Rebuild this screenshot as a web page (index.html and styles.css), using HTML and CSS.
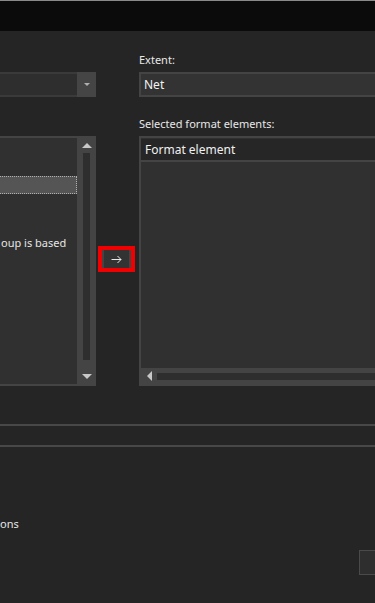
FILE: index.html
```html
<!DOCTYPE html>
<html>
<head>
<meta charset="utf-8">
<link rel="stylesheet" href="styles.css">
</head>
<body>
<div class="topline"></div>
<div class="titlebar"></div>
<div class="main">
  <div class="cols">
    <div class="col-left">
      <div class="combo">
        <div class="combo-field"></div>
        <div class="combo-btn"><span class="tri-down small"></span></div>
      </div>
      <div class="listbox">
        <div class="list-items">
          <div class="item-selected"></div>
          <div class="item-text">oup is based</div>
        </div>
        <div class="vscroll">
          <span class="tri-up"></span>
          <div class="vtrack"></div>
          <span class="tri-down"></span>
        </div>
      </div>
    </div>
    <div class="col-mid">
      <div class="highlight">
        <button class="move-btn" aria-label="Add">
          <svg width="11" height="9" viewBox="0 0 11 9"><path d="M0.5 4.5H10M6.5 1L10 4.5L6.5 8" fill="none" stroke="#e8e8e8" stroke-width="1"/></svg>
        </button>
      </div>
    </div>
    <div class="col-right">
      <div class="label">Extent:</div>
      <div class="textbox">Net</div>
      <div class="label label-list">Selected format elements:</div>
      <div class="grid">
        <div class="grid-header">Format element</div>
        <div class="grid-body"></div>
        <div class="hscroll">
          <span class="tri-left"></span>
          <div class="htrack"></div>
        </div>
      </div>
    </div>
  </div>
  <div class="sep sep1"></div>
  <div class="sep sep2"></div>
  <div class="footer">
    <div class="footer-text">ons</div>
    <div class="footer-btn-row"><div class="footer-btn"></div></div>
  </div>
</div>
</body>
</html>
```
FILE: styles.css
```css
html, body {
  margin: 0;
  padding: 0;
}
body {
  width: 375px;
  height: 603px;
  overflow: hidden;
  background: #252525;
  color: #e6e6e6;
  font-family: "Noto Sans", "Open Sans", sans-serif;
  font-size: 11px;
}
.topline {
  height: 1px;
  background: #8a8a8a;
}
.titlebar {
  height: 30px;
  background: #0b0b0b;
}
.cols {
  display: flex;
  padding-top: 41px;
}
.col-left {
  width: 96px;
  flex: none;
}
.combo {
  display: flex;
  height: 25px;
  background: #3a3a3a;
}
.combo-field {
  flex: 1;
  margin: 2px 0 2px 0;
  background: #2e2e2e;
}
.combo-btn {
  width: 19px;
  background: #454545;
  display: flex;
  align-items: center;
  justify-content: center;
}
.listbox {
  margin-top: 39px;
  height: 250px;
  background: #444444;
  display: flex;
  box-sizing: border-box;
  padding: 2px 0 2px 0;
}
.list-items {
  flex: 1;
  background: #303030;
  padding-top: 38px;
}
.item-selected {
  height: 18px;
  background: #555555;
  border: 1px dotted #b0b0b0;
  border-left: none;
  box-sizing: border-box;
}
.item-text {
  margin-top: 41px;
  padding-left: 1px;
  line-height: 16px;
  color: #e6e6e6;
}
.vscroll {
  width: 19px;
  display: flex;
  flex-direction: column;
  align-items: center;
  padding: 5px 0 5px;
  box-sizing: border-box;
}
.vtrack {
  width: 7px;
  flex: 1;
  background: #2e2e2e;
  margin: 5px 0 14px;
}
.tri-up {
  width: 0;
  height: 0;
  border-left: 5px solid transparent;
  border-right: 5px solid transparent;
  border-bottom: 5px solid #c8c8c8;
}
.tri-down {
  width: 0;
  height: 0;
  border-left: 5px solid transparent;
  border-right: 5px solid transparent;
  border-top: 5px solid #c8c8c8;
}
.tri-down.small {
  border-left-width: 3px;
  border-right-width: 3px;
  border-top-width: 3px;
  border-top-color: #b0b0b0;
}
.tri-left {
  width: 0;
  height: 0;
  border-top: 5px solid transparent;
  border-bottom: 5px solid transparent;
  border-right: 5px solid #c8c8c8;
}
.col-mid {
  width: 43px;
  flex: none;
  padding-top: 174px;
  box-sizing: border-box;
}
.highlight {
  margin-left: 2px;
  width: 37px;
  height: 26px;
  box-sizing: border-box;
  border: 4px solid #f00000;
  display: flex;
}
.move-btn {
  flex: 1;
  margin: 0;
  padding: 0;
  background: #333333;
  border: none;
  border-left: 2px solid #444444;
  border-right: 2px solid #444444;
  display: flex;
  align-items: center;
  justify-content: center;
}
.move-btn svg {
  display: block;
}
.col-right {
  flex: 1;
  margin-right: -40px;
  margin-top: -20px;
}
.label {
  line-height: 16px;
  height: 20px;
  color: #e8e8e8;
}
.label-list {
  margin-top: 19px;
  height: 20px;
}
.textbox {
  height: 25px;
  box-sizing: border-box;
  border: 2px solid #444444;
  background: #333333;
  padding-left: 3px;
  line-height: 21px;
  color: #f2f2f2;
  font-size: 12px;
}
.grid {
  height: 250px;
  box-sizing: border-box;
  border: 2px solid #444444;
  border-right: none;
  display: flex;
  flex-direction: column;
  background: #303030;
}
.grid-header {
  height: 23px;
  box-sizing: border-box;
  margin-top: 1px;
  background: #262626;
  border-bottom: 2px solid #444444;
  padding-left: 4px;
  line-height: 21px;
  color: #f0f0f0;
  font-size: 12px;
}
.grid-body {
  flex: 1;
}
.hscroll {
  height: 16px;
  background: #444444;
  display: flex;
  align-items: center;
  padding-left: 6px;
}
.htrack {
  flex: 1;
  height: 7px;
  background: #2e2e2e;
  margin-left: 5px;
}
.sep {
  height: 2px;
  background: #484848;
}
.sep1 {
  margin-top: 38px;
}
.sep2 {
  margin-top: 19px;
}
.footer-text {
  margin-top: 69px;
  line-height: 16px;
  color: #e6e6e6;
}
.footer-btn-row {
  display: flex;
  justify-content: flex-end;
  margin-top: 18px;
}
.footer-btn {
  width: 16px;
  height: 25px;
  box-sizing: border-box;
  border: 1px solid #4a4a4a;
  border-right: none;
  background: #2e2e2e;
}
```
